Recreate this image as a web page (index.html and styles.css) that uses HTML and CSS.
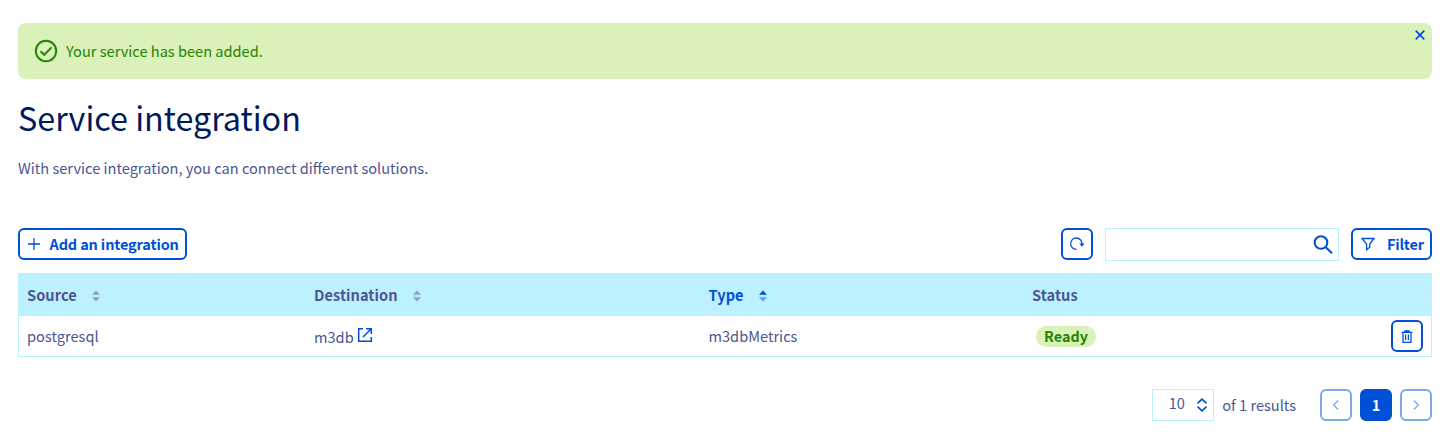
FILE: index.html
```html
<!DOCTYPE html>
<html lang="en">
<head>
<meta charset="utf-8">
<title>Service integration</title>
<link rel="stylesheet" href="styles.css">
</head>
<body>
<main class="page">
  <div class="alert">
    <svg class="alert-icon" width="24" height="24" viewBox="0 0 24 24"><circle cx="12" cy="12" r="10.2"/><path d="M6.5 12.2l3.8 3.6 7.2-7.4"/></svg>
    <span class="alert-text">Your service has been added.</span>
    <button class="alert-close" aria-label="Close"><svg width="10" height="10" viewBox="0 0 10 10"><path d="M.7 .7l8.6 8.6M9.3 .7L.7 9.3"/></svg></button>
  </div>
  <h1 class="title">Service integration</h1>
  <p class="intro">With service integration, you can connect different solutions.</p>

  <div class="toolbar">
    <button class="btn btn-add"><svg width="14" height="14" viewBox="0 0 14 14"><path d="M7 1v12M1 7h12"/></svg><span class="add-label">Add an integration</span></button>
    <div class="tools">
      <button class="btn btn-square" aria-label="Refresh"><svg width="16" height="16" viewBox="0 0 16 16"><path d="M7.4 13.4A5.7 5.7 0 1 1 13 7.9"/><path class="solid" d="M10.2 7.4h5.4L13 10.8z"/></svg></button>
      <div class="search"><input class="search-input" type="text" aria-label="Search"><svg class="search-icon" width="20" height="20" viewBox="0 0 20 20"><circle cx="8" cy="7.5" r="6.3"/><path d="M12.5 12l6.5 6.2"/></svg></div>
      <button class="btn btn-filter"><svg width="14" height="14" viewBox="0 0 14 14"><path d="M1 1.5h12L8.8 7v3.2L5.6 12.6V7z"/></svg><span class="filter-label">Filter</span></button>
    </div>
  </div>

  <div class="table">
    <div class="row head">
      <div class="cell"><span class="th-source">Source</span><svg class="sort" width="8" height="12" viewBox="0 0 8 12"><path d="M0 4.8L4 .5l4 4.3z"/><path d="M0 7.2h8L4 11.5z"/></svg></div>
      <div class="cell"><span class="th-destination">Destination</span><svg class="sort" width="8" height="12" viewBox="0 0 8 12"><path d="M0 4.8L4 .5l4 4.3z"/><path d="M0 7.2h8L4 11.5z"/></svg></div>
      <div class="cell sorted"><span class="th-type">Type</span><svg class="sort" width="8" height="12" viewBox="0 0 8 12"><path d="M0 4.8L4 .5l4 4.3z"/><path class="dim" d="M0 7.2h8L4 11.5z"/></svg></div>
      <div class="cell"><span class="th-status">Status</span></div>
      <div class="cell"></div>
    </div>
    <div class="row">
      <div class="cell">postgresql</div>
      <div class="cell cell-link">m3db<svg class="external" width="16" height="16" viewBox="0 0 16 16"><path d="M6 1.7H1.7v12.6h12.6V10M9 1.7h5.3V7M14 2L6 10"/></svg></div>
      <div class="cell">m3dbMetrics</div>
      <div class="cell"><span class="badge">Ready</span></div>
      <div class="cell cell-action"><button class="btn btn-square" aria-label="Delete"><svg width="12" height="14" viewBox="0 0 12 14"><path d="M.6 3.4h10.8M4 3V2h4v1M2 3.4v9.9h8V3.4M4.6 5.4v5.8M7.4 5.4v5.8"/></svg></button></div>
    </div>
  </div>

  <div class="pagination">
    <div class="page-size"><span>10</span><svg width="12" height="14" viewBox="0 0 12 14"><path d="M1.5 5.3L6 1.2l4.5 4.1M1.5 8.7L6 12.8l4.5-4.1"/></svg></div>
    <span class="results">of 1 results</span>
    <button class="btn btn-square disabled" aria-label="Previous"><svg width="8" height="10" viewBox="0 0 8 10"><path d="M6 .5L1.8 5 6 9.5"/></svg></button>
    <button class="btn btn-square current">1</button>
    <button class="btn btn-square disabled" aria-label="Next"><svg width="8" height="10" viewBox="0 0 8 10"><path d="M2 .5L6.2 5 2 9.5"/></svg></button>
  </div>
</main>
</body>
</html>
```
FILE: styles.css
```css
* { box-sizing: border-box; }
body {
  margin: 0;
  background: #fff;
  color: #4d5592;
  font: 14.6px/24px "Noto Sans CJK SC", "Noto Sans", sans-serif;
}
.page { padding: 23px 17px 0 18px; }
svg { display: block; flex: none; fill: none; stroke: currentColor; stroke-width: 1.3; }
button { font: inherit; cursor: pointer; }

.alert {
  position: relative;
  display: flex;
  align-items: center;
  gap: 8px;
  height: 56px;
  padding: 0 16px;
  border-radius: 8px;
  background: #daf1b9;
  color: #268403;
}
.alert-icon { stroke-width: 2; }
.alert-close {
  position: absolute;
  top: 7px;
  right: 7px;
  padding: 0;
  border: 0;
  background: none;
  color: #0050d7;
}
.alert-close svg { stroke-width: 1.7; }

.title {
  margin: 14px 0 0;
  color: #00185e;
  font-size: 32.3px;
  font-weight: 400;
  line-height: 48px;
}
.intro { margin: 15px 0 0; line-height: 24px; }

.toolbar { display: flex; justify-content: space-between; height: 33px; margin-top: 48px; }
.tools { display: flex; gap: 12px; }
.btn {
  display: flex;
  align-items: center;
  height: 32px;
  padding: 0;
  border: 2px solid #0050d7;
  border-radius: 6px;
  background: #fff;
  color: #0050d7;
  font-size: 14.5px;
  font-weight: 700;
}
.btn-square { width: 32px; justify-content: center; }
.btn-square .solid { fill: currentColor; stroke: none; }
.btn-add { width: 169px; padding-left: 7px; gap: 8.5px; letter-spacing: -.15px; }
.btn-filter { width: 81px; padding-left: 7.5px; gap: 12.5px; letter-spacing: -.2px; }
.search {
  display: flex;
  align-items: center;
  width: 234px;
  height: 33px;
  padding-right: 5px;
  border: 1px solid #bef1ff;
}
.search-input { flex: 1; min-width: 0; height: 29px; border: 0; outline: 0; font: inherit; }
.search-icon { color: #0050d7; stroke-width: 2.1; }

.table { margin-top: 12px; border: 1px solid #bef1ff; }
.row {
  display: grid;
  grid-template-columns: 287px 394.5px 323.5px 1fr 48px;
  align-items: center;
  height: 40px;
}
.head { height: 42px; background: #bef1ff; font-weight: 700; letter-spacing: .04px; }
.cell { display: flex; align-items: center; padding-left: 8px; }
.sort { margin: 2px 0 0 15px; fill: #85a0c9; stroke: none; }
.sorted { color: #0050d7; }
.sorted .sort { fill: currentColor; }
.sorted .dim { opacity: .5; }
.cell-link { padding-top: 1px; }
.external { margin: -3px 0 0 3px; color: #0050d7; stroke-width: 1.5; }
.badge {
  margin-left: 4px;
  width: 60px;
  height: 21px;
  border-radius: 11px;
  background: #daf1b9;
  color: #268403;
  font-size: 14.4px;
  font-weight: 700;
  line-height: 20px;
  text-align: center;
}

.pagination { display: flex; align-items: center; justify-content: flex-end; gap: 8px; margin-top: 32px; }
.page-size {
  display: flex;
  justify-content: space-between;
  width: 62px;
  height: 32px;
  padding: 2px 5px 0 15.5px;
  border: 1px solid #bef1ff;
}
.page-size span { margin-top: -1px; }
.page-size svg { margin-top: 6px; color: #0050d7; stroke-width: 1.7; }
.results { margin-right: 16px; }
.disabled { opacity: .5; }
.current { background: #0050d7; color: #fff; }
```
